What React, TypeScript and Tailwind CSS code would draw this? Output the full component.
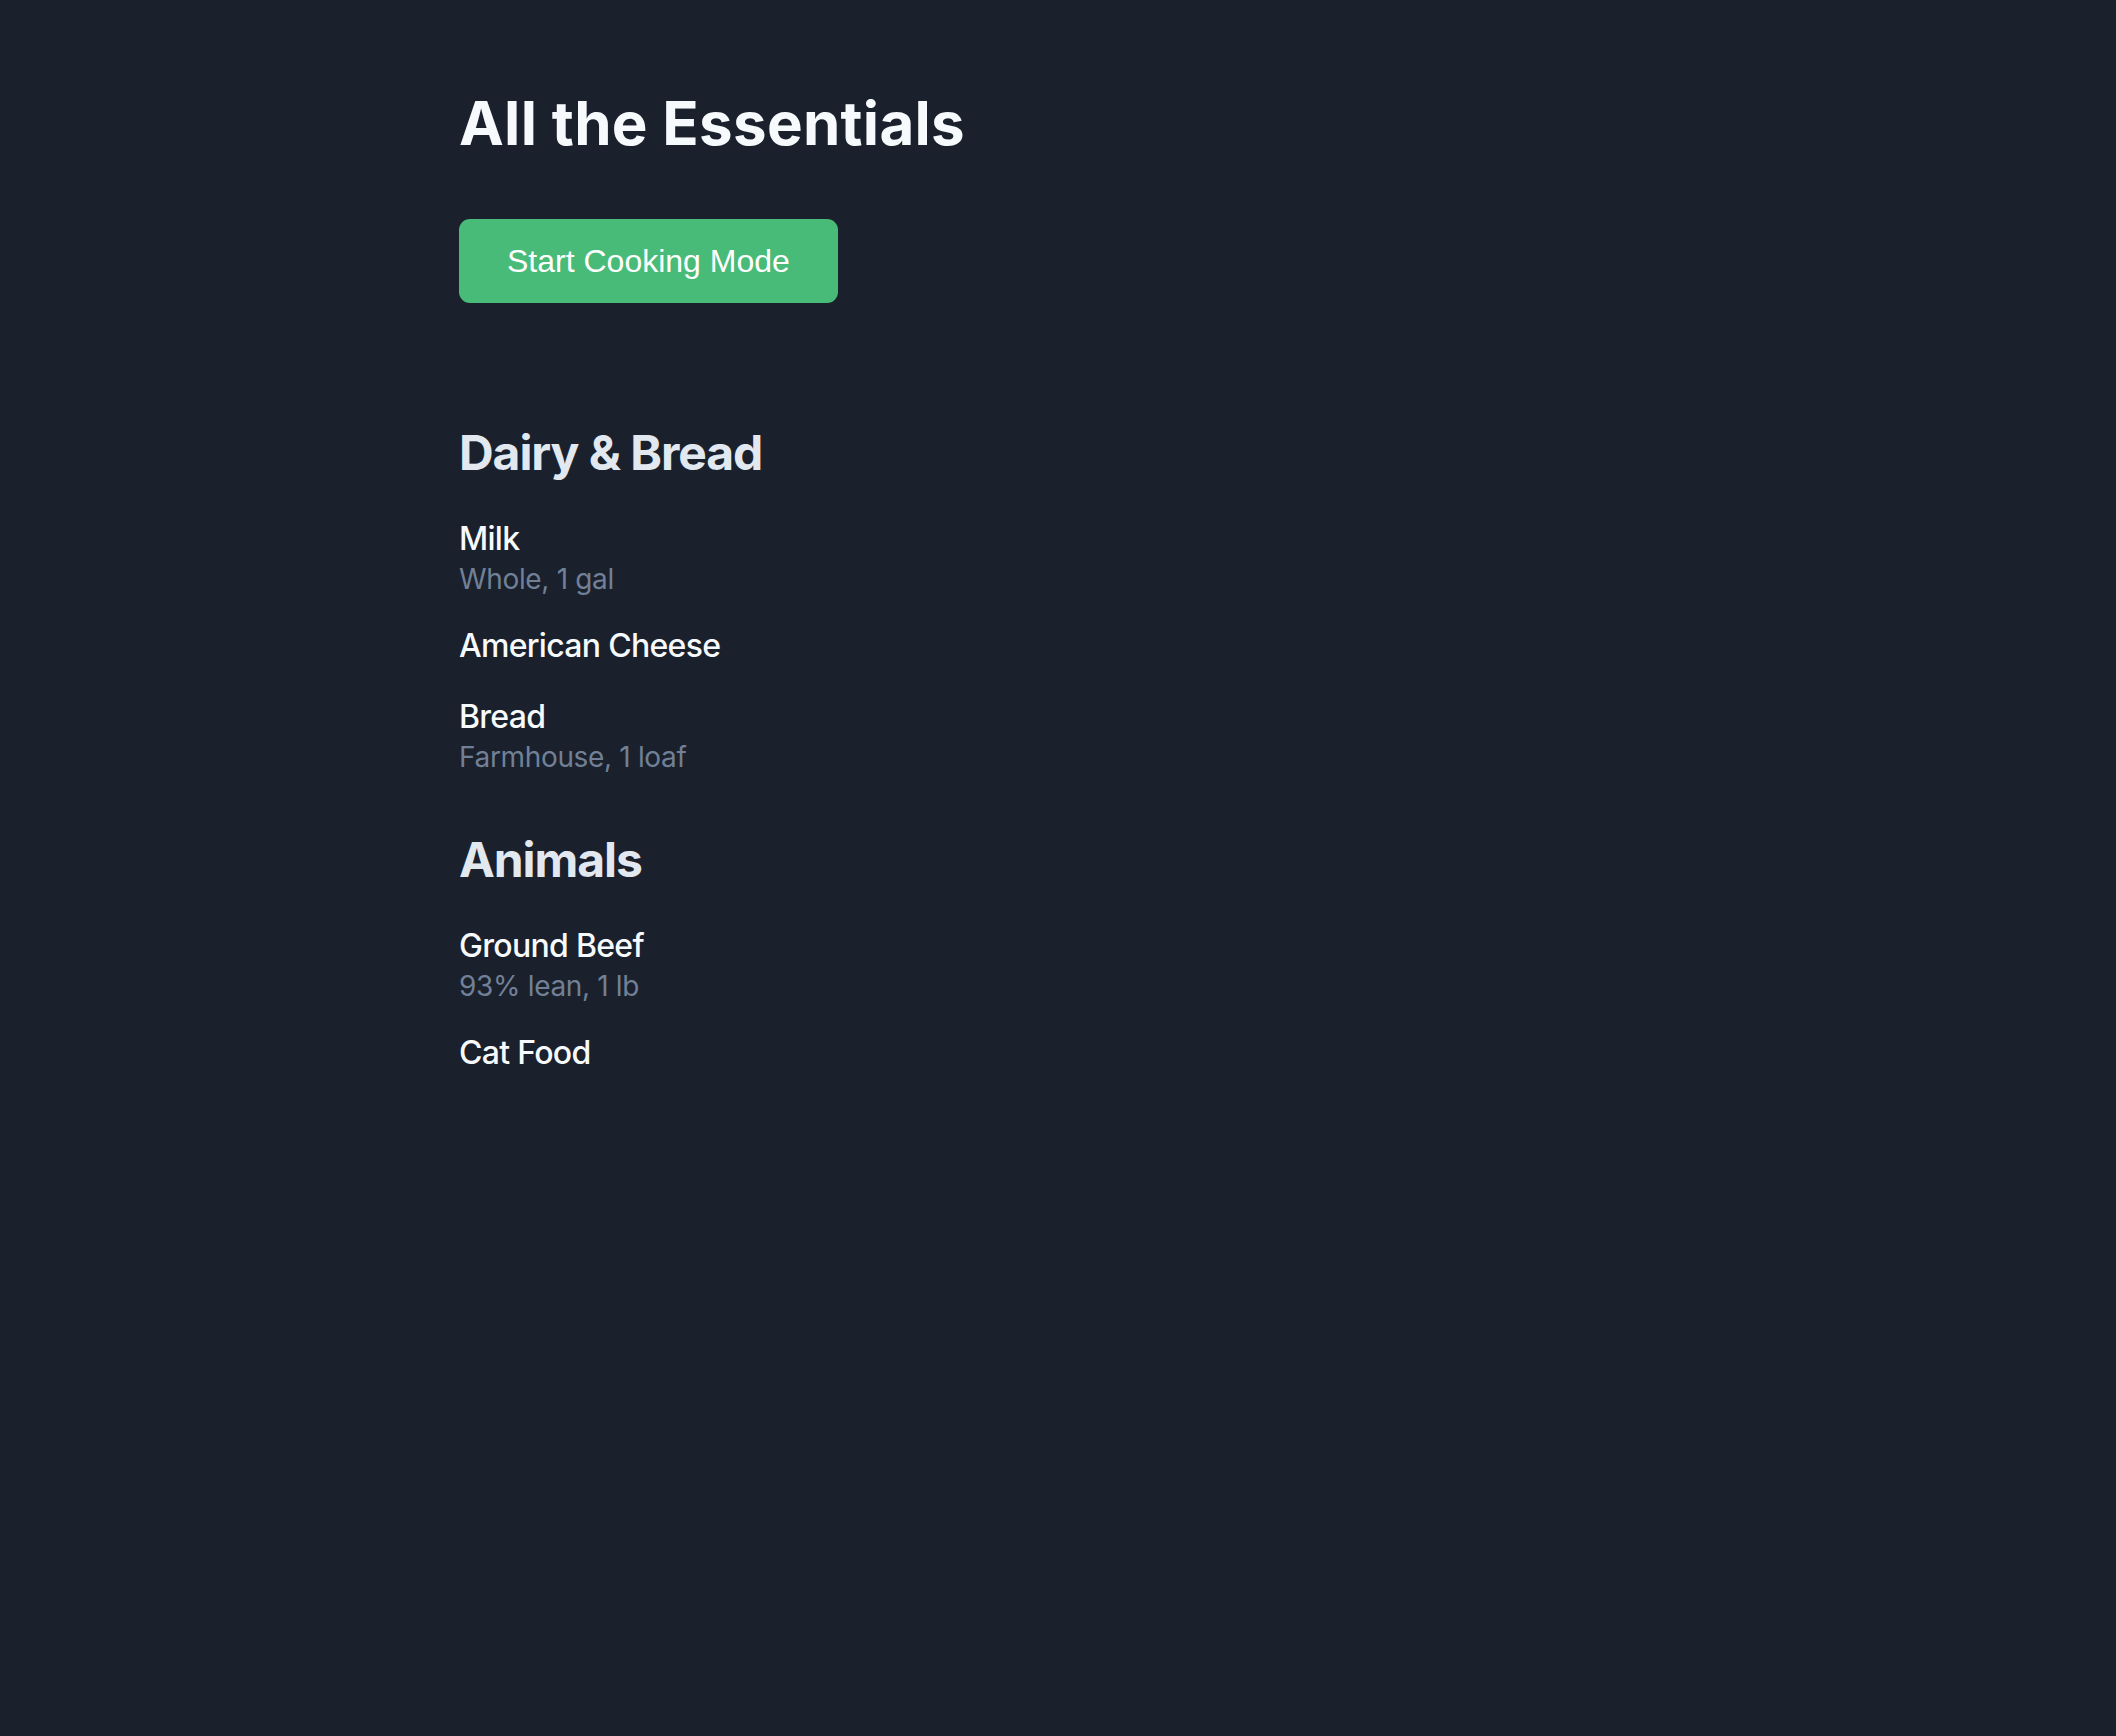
const sections = [
  {
    name: "Dairy & Bread",
    items: [
      { name: "Milk", note: "Whole, 1 gal" },
      { name: "American Cheese" },
      { name: "Bread", note: "Farmhouse, 1 loaf" },
    ],
  },
  {
    name: "Animals",
    items: [
      { name: "Ground Beef", note: "93% lean, 1 lb" },
      { name: "Cat Food" },
    ],
  },
];

export default function App() {
  return (
    <div className="min-h-screen bg-[#1a202c] font-['Inter',sans-serif]">
      <div className="mx-auto max-w-[1198px] pt-[93px] pb-24">
        <h1 className="text-[60px] leading-[60px] font-bold tracking-[0.005em] text-[#f7fafc]">
          All the Essentials
        </h1>
        <button className="mt-[66px] rounded-[11px] bg-[#48bb78] px-12 py-6 font-['Liberation_Sans',Arial,sans-serif] text-[32px] leading-[36px] text-white">
          Start Cooking Mode
        </button>

        <div className="mt-[120px] flex flex-col gap-[55px]">
          {sections.map((section) => (
            <section key={section.name}>
              <h2 className="text-[48px] leading-[60px] font-bold tracking-[-0.022em] text-[#e2e8f0]">
                {section.name}
              </h2>
              <ul className="mt-[34px] flex flex-col gap-[27px]">
                {section.items.map((item) => (
                  <li key={item.name}>
                    <p className="text-[32px] leading-[44px] font-medium tracking-[-0.022em] text-[#f7fafc]">
                      {item.name}
                    </p>
                    {item.note && (
                      <p className="text-[28px] leading-[36px] tracking-[-0.012em] text-[#718096]">
                        {item.note}
                      </p>
                    )}
                  </li>
                ))}
              </ul>
            </section>
          ))}
        </div>
      </div>
    </div>
  );
}
